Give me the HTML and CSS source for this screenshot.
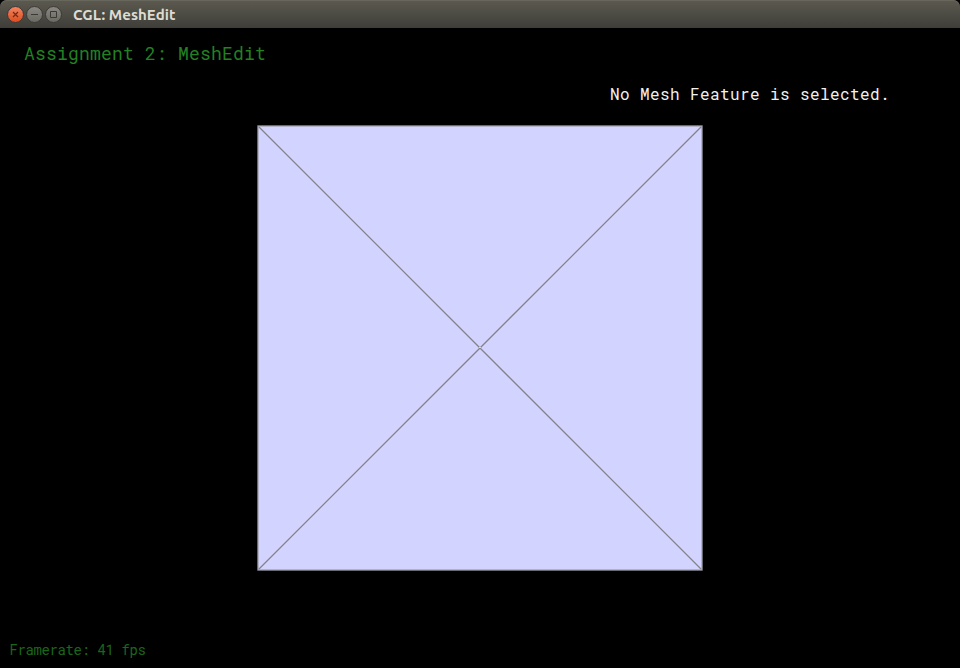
FILE: index.html
```html
<!DOCTYPE html>
<html lang="en">
<head>
<meta charset="utf-8">
<title>CGL: MeshEdit</title>
<link rel="stylesheet" href="styles.css">
</head>
<body>
<div class="window">
  <header class="titlebar">
    <svg class="controls" width="58" height="20" viewBox="0 0 58 20" aria-hidden="true">
      <defs>
        <linearGradient id="close" x1="0" y1="0" x2="0" y2="1"><stop offset="0" stop-color="#f58562"/><stop offset="1" stop-color="#dc4b1d"/></linearGradient>
        <linearGradient id="plain" x1="0" y1="0" x2="0" y2="1"><stop offset="0" stop-color="#8a8983"/><stop offset="1" stop-color="#696861"/></linearGradient>
      </defs>
      <g stroke="#3a3934">
        <circle cx="10.5" cy="9.5" r="8" fill="url(#close)"/>
        <circle cx="29.5" cy="9.5" r="8" fill="url(#plain)"/>
        <circle cx="48.5" cy="9.5" r="8" fill="url(#plain)"/>
      </g>
      <path d="M8 7l5 5M13 7l-5 5" stroke="#6b2d16" stroke-width="1.2"/>
      <path d="M26 9.5h7M45.5 6.5h6v6h-6z" fill="none" stroke="#3a3934"/>
    </svg>
    <h1 class="title">CGL: MeshEdit</h1>
  </header>
  <main class="viewport">
    <p class="heading">Assignment 2: MeshEdit</p>
    <p class="status">No Mesh Feature is selected.</p>
    <svg class="mesh" width="446" height="446" viewBox="0 0 446 446">
      <rect x="1" y="1" width="444" height="444" fill="#d3d3ff"/>
      <path d="M1.5 1.5L444.5 444.5M444.5 1.5L1.5 444.5" stroke="#838389" stroke-width="1.25"/>
      <rect x="1" y="1" width="444" height="444" fill="none" stroke="#a0a0ac" stroke-width="1.3"/>
      <path d="M222 223h2v-1h-2z" fill="#d3d3ff"/>
    </svg>
    <p class="framerate">Framerate: 41 fps</p>
  </main>
</div>
</body>
</html>
```
FILE: styles.css
```css
body { margin: 0; background: #000; }
.window { width: 960px; height: 668px; overflow: hidden; background: #000; display: flex; flex-direction: column; }
.titlebar {
  height: 28px; box-sizing: border-box; padding-left: 5px;
  display: flex; align-items: center; gap: 10px;
  border-radius: 7px 7px 0 0;
  background: linear-gradient(#5c5a50, #3e3d38);
  box-shadow: inset 0 1px #68675d;
}
.controls { display: block; margin-top: 2px; }
.title {
  margin: 1px 0 0; color: #dfdbd2;
  font: bold 15px/20px Ubuntu, "Open Sans", "Noto Sans", sans-serif;
  letter-spacing: 0.06px;
  white-space: nowrap;
}
.viewport { flex: 1; display: flex; flex-direction: column; }
.viewport p { margin: 0; white-space: pre; font-family: "Roboto Mono", "DejaVu Sans Mono", monospace; }
.viewport .heading { margin: 13px 0 0 24px; font-size: 18px; line-height: 24px; letter-spacing: 0.198px; color: #238023; }
.viewport .status { margin: 18px 70px 0 0; align-self: flex-end; font-size: 16px; line-height: 22px; letter-spacing: 0.398px; color: #f0f0f0; }
.mesh { display: block; align-self: center; margin-top: 20px; }
.viewport .framerate { margin: 69px 0 0 9.5px; font-size: 14px; line-height: 20px; letter-spacing: -0.402px; color: #1b661b; }
```
